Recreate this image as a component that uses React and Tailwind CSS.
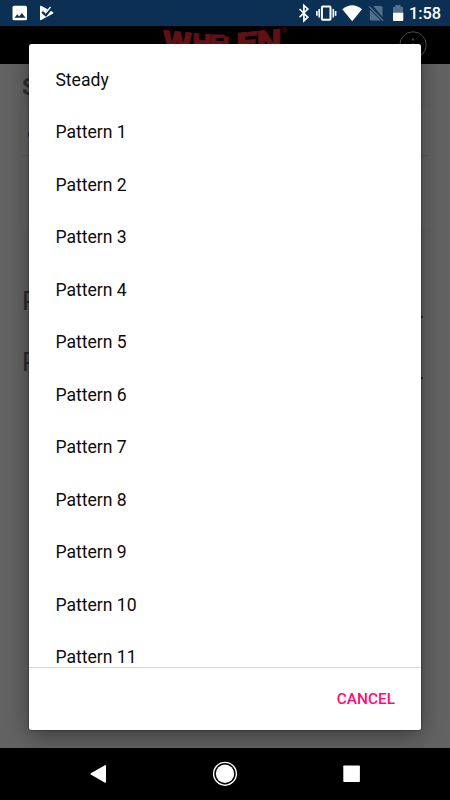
import React from 'react';

const patterns = ['Steady', ...Array.from({ length: 11 }, (_, i) => `Pattern ${i + 1}`)];

function StatusBar() {
  return (
    <div className="relative h-[26px] shrink-0 bg-[#0b3054] flex items-center justify-between pl-3 pr-[9px] text-white">
      <div className="flex items-center gap-[12px]">
        <svg width="16" height="16" viewBox="0 0 16 16">
          <rect x="0.5" y="0.8" width="14.5" height="14.5" rx="1.6" fill="#fff" />
          <path d="M2.5 12.8l2.8-3.6 1.9 2.2 2.6-3.5 3.7 4.9z" fill="#0b3054" />
        </svg>
        <svg width="14" height="16" viewBox="0 0 14 16">
          <path d="M1 0.8Q0 0.5 0 1.6V14.4Q0 15.6 1.1 15L12.8 8.8Q14 7.8 12.8 7z" fill="#fff" />
          <path d="M2.4 6.6l3.4 2.9 5.6-7.3" fill="none" stroke="#0b3054" strokeWidth="3.2" />
          <path d="M3.4 5.6l2.5 2.4 4.6-6" fill="none" stroke="#fff" strokeWidth="1.4" />
          <path d="M2.9 7.6l3 2.7 5.8-7" fill="none" stroke="#0b3054" strokeWidth="1.5" />
        </svg>
      </div>
      <svg width="150" height="26" viewBox="290 0 150 26" className="absolute left-[290px] top-0">
        <path d="M299.6 9l8.2 8.2-3.9 3.6V5.4l3.9 3.6-8.2 8.2" fill="none" stroke="#fff" strokeWidth="1.7" />
        <rect x="321.9" y="6.6" width="8.6" height="13.2" rx="0.8" fill="none" stroke="#fff" strokeWidth="2" />
        <path d="M319.2 9v8.6M333.3 9v8.6M316.9 10.9v4.8M335.6 10.9v4.8" stroke="#fff" strokeWidth="1.6" />
        <path d="M342.3 9.2Q352.2 1.4 362 9.2L352.2 21.2z" fill="#fff" />
        <path d="M373.2 6H381q1.5 0 1.5 1.5V17z" fill="#55708a" />
        <path d="M369.8 9.6L380.6 20.4H371.3q-1.5 0-1.5-1.5z" fill="#55708a" />
        <path d="M369.2 6.6l14 14.2" stroke="#55708a" strokeWidth="1.4" />
        <path d="M393 13V7.8q0-1 1-1h1.5V5h5v1.8h1.6q1 0 1 1V13z" fill="#55708a" />
        <path d="M393 12.8h10.3v7.2q0 1-1 1H394q-1 0-1-1z" fill="#fff" />
      </svg>
      <span className="text-[16.3px] leading-[26px] font-medium mt-[2px]">1:58</span>
    </div>
  );
}

// Letters shrink towards the middle of the word, with slanted tops
function Logo() {
  return (
    <svg
      width="130"
      height="38"
      viewBox="160 26 130 38"
      className="absolute left-[160px] top-0"
      fill="#5f1114"
      stroke="#5f1114"
      strokeWidth="0.8"
      fontWeight="900"
    >
      <g transform="translate(163 50) skewY(6)">
        <text fontSize="28" textLength="29" lengthAdjust="spacingAndGlyphs">W</text>
      </g>
      <g transform="translate(192.5 50) skewY(4)">
        <text fontSize="23.5" textLength="19" lengthAdjust="spacingAndGlyphs">H</text>
      </g>
      <text x="209.5" y="50" fontSize="19.5" textLength="15" lengthAdjust="spacingAndGlyphs">E</text>
      <text x="222.5" y="50" fontSize="18.5" textLength="13" lengthAdjust="spacingAndGlyphs">L</text>
      <g transform="translate(236 54) skewY(-6)">
        <text fontSize="29" textLength="21.5" lengthAdjust="spacingAndGlyphs">E</text>
      </g>
      <g transform="translate(256.5 54) skewY(-6)">
        <text fontSize="32" textLength="25" lengthAdjust="spacingAndGlyphs">N</text>
      </g>
      <text x="281.8" y="33.3" fontSize="6.5" fontWeight="400" strokeWidth="0">®</text>
    </svg>
  );
}

function Background() {
  return (
    <>
      <div className="relative h-[38px] shrink-0 bg-black">
        <Logo />
        <svg width="28" height="28" viewBox="0 0 28 28" className="absolute left-[399px] top-[5px]" fill="none" stroke="#484848" strokeWidth="1">
          <circle cx="14" cy="14" r="13.2" />
          <path d="M14 12v9" />
          <circle cx="14" cy="8.5" r="0.8" fill="#484848" />
        </svg>
      </div>
      <div className="flex-1 bg-[#636363] px-[22px] pt-[10px] text-[#292929] overflow-hidden">
        <h1 className="h-[33px] text-[23px] leading-[28px] font-bold text-[#303030]">S</h1>
        <div className="h-[49px] bg-[#656565] border-b border-[#5a5a5a] pl-[5.5px] pt-[7px] flex items-center">
          <span className="size-[7px] rounded-full bg-[#1b138c]" />
        </div>
        <div className="h-[71px] bg-[#656565]" />
        <div className="mt-[57px] h-[61px] flex justify-between text-[26px] leading-[34px]">
          <span>P</span>
          <span className="mr-[5px] mt-[32px] size-[2px] bg-[#292929]" />
        </div>
        <div className="flex justify-between text-[26px] leading-[34px]">
          <span>P</span>
          <span className="mr-[5px] mt-[32px] size-[2px] bg-[#292929]" />
        </div>
      </div>
    </>
  );
}

function PatternDialog() {
  return (
    <div className="absolute left-[29px] top-[44px] w-[392px] h-[686px] bg-white rounded-[2.5px] overflow-hidden flex flex-col">
      <ul className="h-[623px] pt-[9.5px] overflow-hidden">
        {patterns.map((name) => (
          <li key={name} className="h-[52.5px] pl-[26.4px] flex items-center text-[17.6px] text-[#0c0c0c]">
            {name}
          </li>
        ))}
      </ul>
      <div className="flex-1 border-t border-[#d8d8d8] flex items-center justify-end pr-[26px] pt-px">
        <button className="text-[15.4px] font-medium text-[#fb0d78]">CANCEL</button>
      </div>
    </div>
  );
}

function NavBar() {
  return (
    <div className="h-[52px] shrink-0 bg-black flex justify-center">
      <svg width="450" height="52" viewBox="0 748 450 52" fill="#fff">
        <path d="M90.8 773.2Q90 774 90.8 774.6L104.5 782.6Q106 783.3 106 781.8V766Q106 764.6 104.5 765.4z" />
        <circle cx="225" cy="773.8" r="11.4" fill="none" stroke="#fff" strokeWidth="1.4" />
        <circle cx="225" cy="773.8" r="9.2" />
        <rect x="343.3" y="765.5" width="16.6" height="16.5" rx="0.8" />
      </svg>
    </div>
  );
}

export default function App() {
  return (
    <div className="relative w-[450px] h-[800px] flex flex-col overflow-hidden bg-black font-['Roboto',sans-serif]">
      <StatusBar />
      <Background />
      {/* soft elevation shadow, clipped to the area above the nav bar */}
      <div className="absolute left-0 top-[64px] w-full h-[684px] overflow-hidden">
        <div className="ml-[29px] -mt-[20px] w-[392px] h-[686px] rounded-[3px] shadow-[0_6px_24px_rgba(0,0,0,0.4),0_0_2px_rgba(0,0,0,0.7)]" />
      </div>
      <PatternDialog />
      <NavBar />
    </div>
  );
}
